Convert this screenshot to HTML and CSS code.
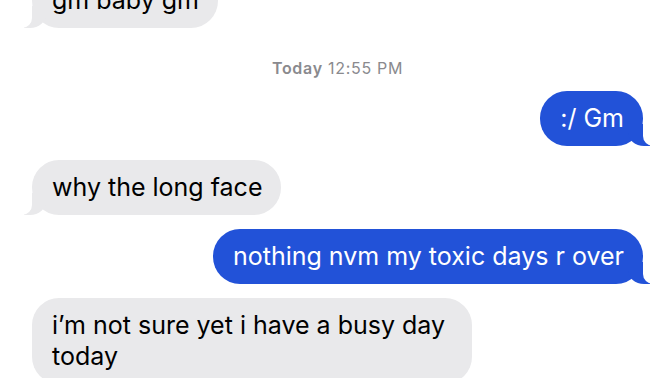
FILE: index.html
```html
<!DOCTYPE html>
<html>
<head>
	<meta charset="utf-8" />
	<meta name="viewport" content="width=device-width, initial-scale=1.0" />
	<title>Messages</title>
	<link rel="stylesheet" href="styles.css">
</head>
<body>
	<div class="thread">
		<div class="msg in tail">gm baby gm</div>
		<div class="stamp"><b>Today</b> 12:55 PM</div>
		<div class="msg out tail">:/ Gm</div>
		<div class="msg in tail">why the long face</div>
		<div class="msg out tail">nothing nvm my toxic days r over</div>
		<div class="msg in">i’m not sure yet i have a busy day today</div>
	</div>
</body>
</html>
```

FILE: styles.css
```css
*{
	margin: 0;
	padding: 0;
	box-sizing: border-box;
}
body{
	background: #FFFFFF;
	font-family: Inter, "Liberation Sans", sans-serif;
	overflow: hidden;
}
.thread{
	display: flex;
	flex-direction: column;
	gap: 14px;
	padding: 0 29px 0 32px;
	margin-top: -27px;
}
.msg{
	position: relative;
	max-width: 440px;
	padding: 12px 19px 12px 20px;
	border-radius: 27px;
	font-size: 25px;
	line-height: 31px;
}
.in{
	align-self: flex-start;
	background: #E9E9EB;
	color: #000000;
}
.out{
	align-self: flex-end;
	background: #2252D8;
	color: #FFFFFF;
}
/* bubble tails */
.tail::before,
.tail::after{
	content: "";
	position: absolute;
	bottom: 0;
	height: 22px;
}
.in.tail::before{
	left: -8px;
	width: 22px;
	background: #E9E9EB;
	border-bottom-right-radius: 16px 14px;
}
.in.tail::after{
	left: -10px;
	width: 10px;
	background: #FFFFFF;
	border-bottom-right-radius: 10px;
}
.out.tail::before{
	right: -7px;
	width: 22px;
	background: #2252D8;
	border-bottom-left-radius: 16px 14px;
}
.out.tail::after{
	right: -10px;
	width: 10px;
	background: #FFFFFF;
	border-bottom-left-radius: 10px;
}
.stamp{
	align-self: center;
	margin: 17px 0 0;
	font-size: 16px;
	line-height: 18px;
	letter-spacing: 0.7px;
	color: #8A8A8E;
}
.stamp b{
	font-weight: 600;
}
```
